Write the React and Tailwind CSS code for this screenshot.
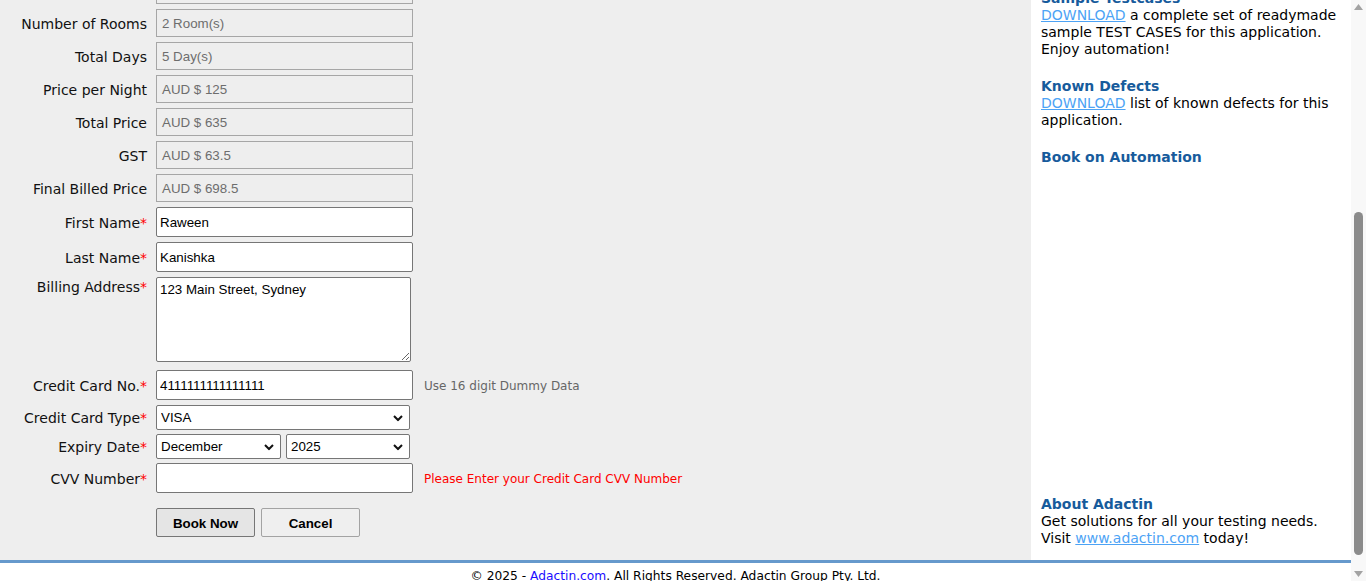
import React from "react";

const labelFont = { fontFamily: '"DejaVu Sans", Verdana, sans-serif' };
const inputFont = { fontFamily: '"Liberation Sans", Arial, sans-serif' };

function Label({ children, required, top }) {
  return (
    <div
      className={`w-[156px] shrink-0 pr-[9px] pt-[2px] text-right text-[14px] leading-[17px] text-[#111] ${top ? "self-start" : ""}`}
      style={labelFont}
    >
      {children}
      {required && <span className="text-[#ff0000]">*</span>}
    </div>
  );
}

function ReadRow({ label, value, first }) {
  return (
    <div className={`flex items-center ${first ? "" : "mt-[5px]"}`}>
      <Label>{label}</Label>
      <div
        className="flex h-[28px] w-[257px] items-center border border-[#a6a6a6] bg-[#eeeeee] pl-[5px] pt-[2px] text-[13.33px] text-[#6d6d6d]"
        style={inputFont}
      >
        {value}
      </div>
    </div>
  );
}

function Chevron() {
  return (
    <svg
      className="pointer-events-none absolute right-[7px] top-1/2 -translate-y-1/2"
      width="10"
      height="7"
      viewBox="0 0 10 7"
    >
      <polyline points="1,1.5 5,5.5 9,1.5" fill="none" stroke="#111" strokeWidth="2" />
    </svg>
  );
}

function Select({ value, width }) {
  return (
    <div className={`relative h-[25px] ${width}`}>
      <select
        defaultValue={value}
        className="block h-full w-full appearance-none rounded-[2px] border border-[#767676] bg-white pl-[4px] text-[13.33px] text-black outline-none"
        style={inputFont}
      >
        <option>{value}</option>
      </select>
      <Chevron />
    </div>
  );
}

function TextInput({ value, className = "" }) {
  return (
    <input
      readOnly
      value={value}
      className={`block h-[30px] w-[257px] rounded-[2px] border border-[#767676] bg-white px-[3px] text-[13.33px] text-black outline-none ${className}`}
      style={inputFont}
    />
  );
}

function SideBlock({ title, children, className = "" }) {
  return (
    <div className={className}>
      <div className="text-[14px] font-bold leading-[17px] text-[#175b9c]">{title}</div>
      {children && <div className="text-[14px] leading-[17px] text-black">{children}</div>}
    </div>
  );
}

function Link({ children }) {
  return <span className="text-[#4da3f5] underline">{children}</span>;
}

function Scrollbar() {
  return (
    <div className="flex h-full w-[15px] shrink-0 flex-col items-center bg-[#f8f8f8]">
      <div className="flex h-[14px] w-full items-center justify-center">
        <svg width="9" height="6" viewBox="0 0 9 6">
          <polygon points="0,6 9,6 4.5,0" fill="#a3a3a3" />
        </svg>
      </div>
      <div className="w-full flex-1 px-[3px] pt-[198px] pb-[12px]">
        <div className="h-full w-full rounded-full bg-[#8b8b8b]" />
      </div>
      <div className="flex h-[14px] w-full items-center justify-center">
        <svg width="9" height="6" viewBox="0 0 9 6">
          <polygon points="0,0 9,0 4.5,6" fill="#a3a3a3" />
        </svg>
      </div>
    </div>
  );
}

export default function App() {
  return (
    <div className="flex h-[581px] w-[1366px] overflow-hidden bg-white">
      <div
        className="h-full flex-1 overflow-hidden"
        ref={(el) => {
          if (el) el.scrollTop = 100;
        }}
      >
        <div className="flex">
          {/* Form column */}
          <div className="flex w-[1031px] flex-col bg-[#eeeeee] pt-[10px] pb-[23px]">
            <ReadRow label="Hotel Name" value="Hotel Creek" first />
            <ReadRow label="Location" value="Sydney" />
            <ReadRow label="Room Type" value="Standard" />
            <ReadRow label="Number of Rooms" value="2 Room(s)" />
            <ReadRow label="Total Days" value="5 Day(s)" />
            <ReadRow label="Price per Night" value="AUD $ 125" />
            <ReadRow label="Total Price" value="AUD $ 635" />
            <ReadRow label="GST" value="AUD $ 63.5" />
            <ReadRow label="Final Billed Price" value="AUD $ 698.5" />

            <div className="mt-[5px] flex h-[30px] items-center">
              <Label required>First Name</Label>
              <TextInput value="Raween" />
            </div>
            <div className="mt-[5px] flex h-[30px] items-center">
              <Label required>Last Name</Label>
              <TextInput value="Kanishka" />
            </div>
            <div className="mt-[5px] flex h-[85px]">
              <Label required top>
                Billing Address
              </Label>
              <textarea
                readOnly
                defaultValue="123 Main Street, Sydney"
                className="block h-[85px] w-[255px] rounded-[2px] border border-[#767676] bg-white px-[3px] py-[4px] text-[13.33px] leading-[15px] text-black outline-none"
                style={inputFont}
              />
            </div>
            <div className="mt-[8px] flex h-[30px] items-center">
              <Label required>Credit Card No.</Label>
              <TextInput value="4111111111111111" />
              <span className="ml-[11px] pt-[2px] text-[12px] leading-[14px] text-[#666666]" style={labelFont}>
                Use 16 digit Dummy Data
              </span>
            </div>
            <div className="mt-[5px] flex h-[25px] items-center">
              <Label required>Credit Card Type</Label>
              <Select value="VISA" width="w-[254px]" />
            </div>
            <div className="mt-[4px] flex h-[25px] items-center">
              <Label required>Expiry Date</Label>
              <div className="flex gap-[5px]">
                <Select value="December" width="w-[125px]" />
                <Select value="2025" width="w-[124px]" />
              </div>
            </div>
            <div className="mt-[4px] flex h-[30px] items-center">
              <Label required>CVV Number</Label>
              <TextInput value="" />
              <span className="ml-[11px] pt-[2px] text-[12px] leading-[14px] text-[#ff0000]" style={labelFont}>
                Please Enter your Credit Card CVV Number
              </span>
            </div>
            <div className="mt-[15px] flex gap-[6px] pl-[156px]">
              <button
                className="h-[29px] w-[99px] rounded-[2px] border border-[#767676] bg-[#e5e5e5] pt-[3px] text-[13.33px] font-bold text-black"
                style={inputFont}
              >
                Book Now
              </button>
              <button
                className="h-[29px] w-[99px] rounded-[2px] border border-[#a3a3a3] bg-[#efefef] pt-[3px] text-[13.33px] font-bold text-black"
                style={inputFont}
              >
                Cancel
              </button>
            </div>
          </div>

          {/* Sidebar */}
          <div className="flex w-[320px] flex-col bg-white px-[10px] pt-[90px] pb-[13px]" style={labelFont}>
            <SideBlock title="Sample Testcases" className="mb-[20px]">
              <Link>DOWNLOAD</Link> a complete set of readymade sample TEST CASES for this application. Enjoy
              automation!
            </SideBlock>
            <SideBlock title="Known Defects" className="mb-[20px]">
              <Link>DOWNLOAD</Link> list of known defects for this application.
            </SideBlock>
            <SideBlock title="Book on Automation" className="mb-[330px]" />
            <SideBlock title="About Adactin">
              Get solutions for all your testing needs.
              <br />
              Visit <Link>www.adactin.com</Link> today!
            </SideBlock>
          </div>
        </div>

        {/* Footer */}
        <div className="h-[3px] w-full bg-[#6699cc]" />
        <div
          className="bg-white pt-[5px] pb-[20px] text-center text-[12.25px] leading-[17px] text-black"
          style={labelFont}
        >
          © 2025 - <span className="text-[#1a0dff]">Adactin.com</span>. All Rights Reserved. Adactin Group Pty. Ltd.
        </div>
      </div>
      <Scrollbar />
    </div>
  );
}
